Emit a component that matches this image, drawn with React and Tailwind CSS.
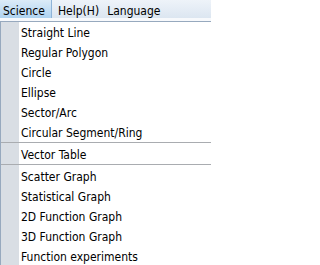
import React from 'react';

const groups = [
  ['Straight Line', 'Regular Polygon', 'Circle', 'Ellipse', 'Sector/Arc', 'Circular Segment/Ring'],
  ['Vector Table'],
  ['Scatter Graph', 'Statistical Graph', '2D Function Graph', '3D Function Graph', 'Function experiments'],
];

const MenuItem = ({ label }) => (
  <div className="flex h-[20px] items-stretch">
    <div className="w-[18px] shrink-0 bg-[#d9dee4]" />
    <span className="pl-[2px] pt-[5px] text-[12px] leading-[12px] text-black">{label}</span>
  </div>
);

const App = () => {
  return (
    <div className="h-[265px] w-[211px] overflow-hidden bg-white" style={{ fontFamily: '"DejaVu Sans Condensed", "Liberation Sans", Arial, sans-serif' }}>
      {/* menu bar */}
      <div className="flex h-[18px] items-stretch bg-gradient-to-b from-[#eef3f9] to-[#dce6f1] text-[12px] leading-[12px] text-black">
        <div className="w-[52px] border-r border-[#8fb4d8] bg-gradient-to-b from-[#dcebf8] to-[#aed3f1] pl-[3px] pt-[5px]">
          Science
        </div>
        <div className="pl-[6px] pt-[5px]">Help(H)</div>
        <div className="pl-[8px] pt-[5px]">Language</div>
      </div>
      <div className="h-[3px] bg-[#f7f9fc]" />

      {/* dropdown */}
      <div className="border-l border-t border-[#97a9be]">
        {groups.map((items, gi) => (
          <div key={gi}>
            {gi > 0 && (
              <div>
                <div className="h-px bg-[#a9acb0]" />
                <div className="flex h-px">
                  <div className="w-[18px] bg-[#d9dee4]" />
                </div>
              </div>
            )}
            {items.map((label) => (
              <MenuItem key={label} label={label} />
            ))}
          </div>
        ))}
      </div>
    </div>
  );
};

export default App;
